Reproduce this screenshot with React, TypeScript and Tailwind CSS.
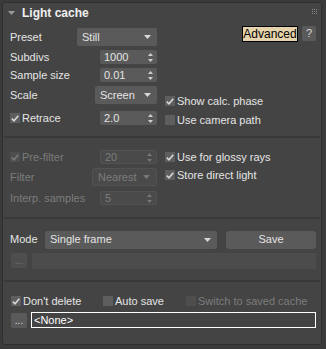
import type { ReactNode } from 'react';

const font = { fontFamily: '"Liberation Sans", Arial, sans-serif' };

function Spin({ value, disabled }: { value: string; disabled?: boolean }) {
  return (
    <div
      className={`w-[57px] h-[14px] rounded-[2px] flex items-center justify-between pl-[4px] pr-[4px] ${
        disabled ? 'bg-[#4a4a4a] border border-[#525252] text-[#7c7c7c]' : 'bg-[#5a5a5a] text-[#e4e4e4]'
      }`}
    >
      <span className="leading-none">{value}</span>
      <svg width="5" height="9" viewBox="0 0 5 9" className={disabled ? 'text-[#777]' : 'text-[#cfcfcf]'}>
        <path d="M2.5 0L5 3H0z M2.5 9L0 6h5z" fill="currentColor" />
      </svg>
    </div>
  );
}

function Drop({ value, w, disabled }: { value: string; w: string; disabled?: boolean }) {
  return (
    <div
      className={`${w} h-[18px] rounded-[2px] flex items-center justify-between pl-[5px] pr-[6px] ${
        disabled ? 'bg-[#4a4a4a] border border-[#525252] text-[#7c7c7c]' : 'bg-[#5a5a5a] text-[#e4e4e4]'
      }`}
    >
      <span className="leading-none">{value}</span>
      <svg width="7" height="4" viewBox="0 0 7 4" className={disabled ? 'text-[#777]' : 'text-[#d8d8d8]'}>
        <path d="M0 0h7L3.5 4z" fill="currentColor" />
      </svg>
    </div>
  );
}

function Check({ on, label, disabled }: { on: boolean; label: string; disabled?: boolean }) {
  return (
    <div className={`flex items-center gap-[2px] h-[12px] ${disabled ? 'text-[#7c7c7c]' : 'text-[#e4e4e4]'}`}>
      <div className={`w-[10px] h-[10px] flex items-center justify-center ${disabled ? 'bg-[#4e4e4e]' : 'bg-[#5e5e5e]'}`}>
        {on && (
          <svg width="8" height="7" viewBox="0 0 8 7">
            <path d="M0.8 3.6L3 5.8L7.3 0.8" stroke={disabled ? '#7a7a7a' : '#d6d6d6'} strokeWidth="1.6" fill="none" />
          </svg>
        )}
      </div>
      <span className="leading-none">{label}</span>
    </div>
  );
}

function Row({ label, children, className, dim }: { label: ReactNode; children: ReactNode; className: string; dim?: boolean }) {
  return (
    <div className={`flex items-center justify-between ${className}`}>
      <span className={`leading-none ${dim ? 'text-[#7c7c7c]' : 'text-[#e4e4e4]'}`}>{label}</span>
      {children}
    </div>
  );
}

function Sep({ className }: { className: string }) {
  return <div className={`mx-[1px] h-[2px] bg-[#393939] ${className}`} />;
}

function Dots() {
  return (
    <div className="grid grid-cols-3 gap-[1px]">
      {Array.from({ length: 9 }).map((_, i) => (
        <div key={i} className="w-[1px] h-[1px] bg-[#8a8a8a]" />
      ))}
    </div>
  );
}

export default function App() {
  return (
    <div className="w-[326px] h-[349px] bg-[#3a3a3a] p-[2px] text-[11px]" style={font}>
      <div className="w-[320px] h-[343px] border border-[#2f2f2f] rounded-[3px] bg-[#444444] flex flex-col">
        {/* header */}
        <div className="h-[20px] flex items-center pl-[5px] pr-[4px]">
          <svg width="7" height="4" viewBox="0 0 7 4" className="text-[#9a9a9a]">
            <path d="M0 0h7L3.5 4z" fill="currentColor" />
          </svg>
          <span className="ml-[7px] text-[12px] font-bold text-[#f0f0f0] leading-none">Light cache</span>
          <div className="ml-auto -mt-[4px]">
            <Dots />
          </div>
        </div>

        {/* section 1 */}
        <div className="flex pl-[7px] pr-[5px] pt-[5px]">
          <div className="w-[147px] flex flex-col">
            <Row label="Preset" className="h-[18px]">
              <Drop value="Still" w="w-[80px]" />
            </Row>
            <Row label="Subdivs" className="h-[14px] mt-[4px]">
              <Spin value="1000" />
            </Row>
            <Row label="Sample size" className="h-[14px] mt-[4px]">
              <Spin value="0.01" />
            </Row>
            <Row label="Scale" className="h-[18px] mt-[4px]">
              <Drop value="Screen" w="w-[62px]" />
            </Row>
            <Row label={<Check on label="Retrace" />} className="h-[14px] mt-[7px]">
              <Spin value="2.0" />
            </Row>
          </div>
          <div className="flex-1 flex flex-col pl-[8px]">
            <div className="flex justify-end gap-[4px] h-[16px] -mt-[2px]">
              <div className="w-[56px] h-[16px] bg-[#e5d3ac] border border-black flex items-center justify-center text-black text-[12px] leading-none">
                Advanced
              </div>
              <div className="w-[14px] h-[15px] rounded-[2px] bg-[#5a5a5a] flex items-center justify-center text-[#d8d8d8] leading-none">
                ?
              </div>
            </div>
            <div className="mt-[53px]">
              <Check on label="Show calc. phase" />
            </div>
            <div className="mt-[7px]">
              <Check on={false} label="Use camera path" />
            </div>
          </div>
        </div>

        <Sep className="mt-[10px]" />

        {/* section 2 */}
        <div className="flex pl-[7px] pr-[5px] pt-[12px]">
          <div className="w-[147px] flex flex-col">
            <Row label={<Check on disabled label="Pre-filter" />} className="h-[14px]">
              <Spin value="20" disabled />
            </Row>
            <Row label="Filter" dim className="h-[18px] mt-[4px]">
              <Drop value="Nearest" w="w-[65px]" disabled />
            </Row>
            <Row label="Interp. samples" dim className="h-[14px] mt-[5px]">
              <Spin value="5" disabled />
            </Row>
          </div>
          <div className="flex-1 flex flex-col pl-[8px]">
            <div className="mt-[1px]">
              <Check on label="Use for glossy rays" />
            </div>
            <div className="mt-[6px]">
              <Check on label="Store direct light" />
            </div>
          </div>
        </div>

        <Sep className="mt-[12px]" />

        {/* section 3 */}
        <div className="flex flex-col pl-[7px] pr-[5px] pt-[11px]">
          <div className="flex items-center h-[19px]">
            <span className="w-[35px] text-[#e4e4e4] leading-none">Mode</span>
            <Drop value="Single frame" w="w-[172px]" />
            <div className="ml-[9px] flex-1 h-[18px] rounded-[3px] bg-[#5a5a5a] flex items-center justify-center text-[#e4e4e4] leading-none">
              Save
            </div>
          </div>
          <div className="flex items-center mt-[4px] h-[15px]">
            <div className="ml-[1px] w-[16px] h-[15px] rounded-[2px] bg-[#4e4e4e] flex items-end justify-center pb-[2px] text-[#7c7c7c] leading-none text-[10px]">
              ...
            </div>
            <div className="ml-[5px] flex-1 h-[16px] bg-[#4c4c4c]" />
          </div>
        </div>

        <Sep className="mt-[12px]" />

        {/* section 4 */}
        <div className="flex flex-col pl-[8px] pr-[5px] pt-[13px]">
          <div className="flex items-center">
            <div className="w-[92px]">
              <Check on label="Don't delete" />
            </div>
            <div className="w-[83px]">
              <Check on={false} label="Auto save" />
            </div>
            <Check on={false} disabled label="Switch to saved cache" />
          </div>
          <div className="flex items-center mt-[5px] h-[16px]">
            <div className="w-[16px] h-[15px] rounded-[2px] bg-[#5a5a5a] flex items-end justify-center pb-[2px] text-[#d8d8d8] leading-none text-[10px]">
              ...
            </div>
            <div className="ml-[4px] flex-1 h-[16px] border border-white bg-[#444444] flex items-center pl-[2px] text-white leading-none">
              &lt;None&gt;
            </div>
          </div>
        </div>
      </div>
    </div>
  );
}
